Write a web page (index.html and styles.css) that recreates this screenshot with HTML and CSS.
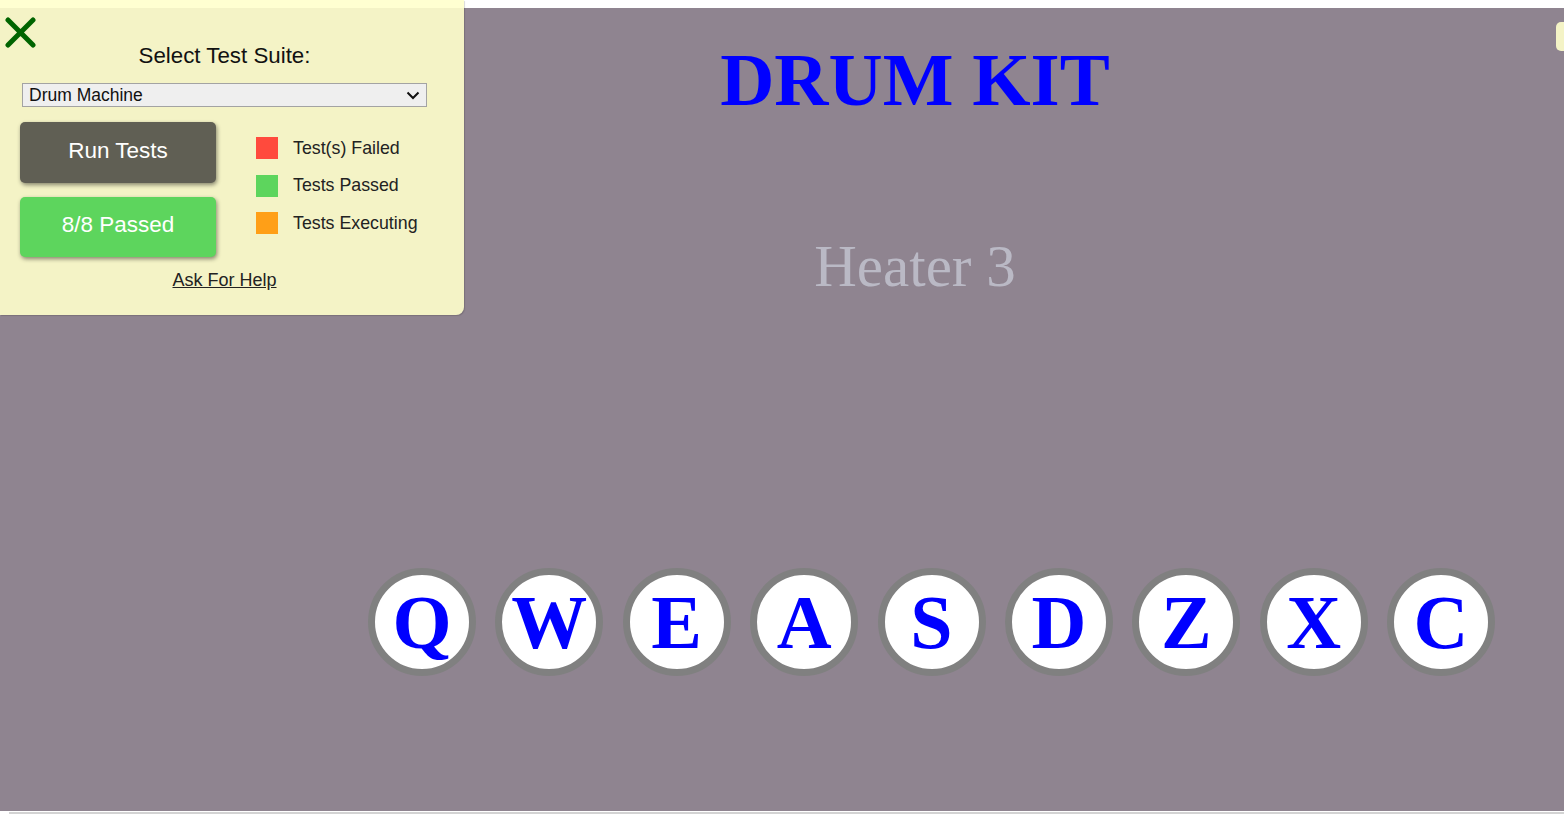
FILE: index.html
```html
<!DOCTYPE html>
<html lang="en">
<head>
<meta charset="utf-8">
<title>Drum Kit</title>
<link rel="stylesheet" href="styles.css">
</head>
<body>
<div class="page">
  <main class="stage">
    <div class="head">
      <h1 class="title">DRUM KIT</h1>
      <div class="display">Heater 3</div>
    </div>
    <div class="pads">
      <div class="pad">Q</div>
      <div class="pad">W</div>
      <div class="pad">E</div>
      <div class="pad">A</div>
      <div class="pad">S</div>
      <div class="pad">D</div>
      <div class="pad">Z</div>
      <div class="pad">X</div>
      <div class="pad">C</div>
    </div>
    <div class="side-tab"></div>
  </main>
  <div class="bottom-line"></div>
</div>

<section class="panel">
  <button class="close" aria-label="Close">
    <svg width="32" height="32" viewBox="0 0 32 32"><path d="M4 4 L29 29 M29 4 L4 29" stroke="#006400" stroke-width="5" stroke-linecap="round" fill="none"/></svg>
  </button>
  <div class="panel-title">Select Test Suite:</div>
  <div class="select-wrap">
    <select class="suite"><option>Drum Machine</option></select>
    <svg class="chev" width="14" height="9" viewBox="0 0 14 9"><path d="M1.5 1.5 L7 7 L12.5 1.5" stroke="#111" stroke-width="2" fill="none"/></svg>
  </div>
  <div class="controls">
    <div class="btns">
      <div class="btn run">Run Tests</div>
      <div class="btn passed">8/8 Passed</div>
    </div>
    <ul class="legend">
      <li><span class="sq red"></span>Test(s) Failed</li>
      <li><span class="sq green"></span>Tests Passed</li>
      <li><span class="sq orange"></span>Tests Executing</li>
    </ul>
  </div>
  <a class="help" href="#">Ask For Help</a>
</section>
</body>
</html>
```
FILE: styles.css
```css
html, body {
  margin: 0;
  padding: 0;
  background: #ffffff;
  overflow: hidden;
}
.page {
  padding-top: 8px;
}
.stage {
  position: relative;
  height: 803px;
  background: #8f8490;
  display: flex;
  flex-direction: column;
}
.head {
  padding-left: 266px;
  text-align: center;
  font-family: "Liberation Serif", "Times New Roman", serif;
}
.title {
  margin: 34px 0 0;
  font-size: 75px;
  line-height: 1;
  font-weight: bold;
  color: #0000ff;
}
.display {
  margin-top: 120px;
  font-size: 59px;
  line-height: 1;
  color: #bab9c5;
}
.pads {
  margin-top: 272px;
  padding-left: 299px;
  display: flex;
  justify-content: center;
  gap: 19.4px;
}
.pad {
  width: 108px;
  height: 108px;
  box-sizing: border-box;
  border: 7px solid #808080;
  border-radius: 50%;
  background: #ffffff;
  display: flex;
  align-items: center;
  justify-content: center;
  font-family: "Liberation Serif", "Times New Roman", serif;
  font-weight: bold;
  font-size: 76px;
  line-height: 1;
  color: #0000ff;
}
.side-tab {
  position: absolute;
  right: 0;
  top: 14px;
  width: 8px;
  height: 29px;
  background: #f4f3c6;
  border-radius: 5px 0 0 5px;
}
.bottom-line {
  margin: 1px 0 0 9px;
  height: 2px;
  background: #d3d3d3;
}

/* test panel */
.panel {
  position: absolute;
  top: 0;
  left: 0;
  width: 464px;
  height: 315px;
  box-sizing: border-box;
  padding-right: 15px;
  background: rgba(255, 255, 204, 0.9);
  border-bottom-right-radius: 8px;
  box-shadow: 1px 1px 1px rgba(0, 0, 0, 0.15);
  font-family: "Liberation Sans", Arial, sans-serif;
  color: #111;
  display: flex;
  flex-direction: column;
  align-items: center;
}
.close {
  position: absolute;
  left: 4px;
  top: 16px;
  width: 32px;
  height: 32px;
  padding: 0;
  border: 0;
  background: transparent;
}
.close svg { display: block; }
.panel-title {
  margin-top: 43px;
  font-size: 22.3px;
  line-height: 26px;
}
.select-wrap {
  position: relative;
  margin-top: 14px;
  width: 405px;
  height: 24px;
}
.suite {
  appearance: none;
  -webkit-appearance: none;
  width: 405px;
  height: 24px;
  box-sizing: border-box;
  margin: 0;
  padding: 0 0 0 6px;
  border: 1px solid #a3a3a3;
  border-radius: 0;
  background: #efefef;
  font-family: "Liberation Sans", Arial, sans-serif;
  font-size: 17.5px;
  color: #111;
}
.chev {
  position: absolute;
  right: 7px;
  top: 8px;
  pointer-events: none;
}
.controls {
  margin-top: 15px;
  align-self: flex-start;
  padding-left: 20px;
  display: flex;
  gap: 40px;
}
.btns {
  display: flex;
  flex-direction: column;
  gap: 14px;
}
.btn {
  width: 196px;
  height: 61px;
  box-sizing: border-box;
  padding-bottom: 4px;
  border-radius: 5px;
  display: flex;
  align-items: center;
  justify-content: center;
  color: #ffffff;
  font-size: 22.5px;
  box-shadow: 1px 2px 4px rgba(0, 0, 0, 0.45);
}
.run { background: #605f54; }
.passed { background: #5dd55d; height: 60px; }
.legend {
  list-style: none;
  margin: 15px 0 0;
  padding: 0;
  display: flex;
  flex-direction: column;
  gap: 15.5px;
}
.legend li {
  display: flex;
  align-items: center;
  height: 22px;
  font-size: 17.8px;
  color: #222;
}
.sq {
  width: 22px;
  height: 22px;
  margin-right: 15px;
}
.red { background: #ff4a3d; }
.green { background: #5dd55d; }
.orange { background: #ff9f17; }
.help {
  margin-top: 13px;
  font-size: 18px;
  line-height: 21px;
  color: #222;
  text-decoration: underline;
}
```
